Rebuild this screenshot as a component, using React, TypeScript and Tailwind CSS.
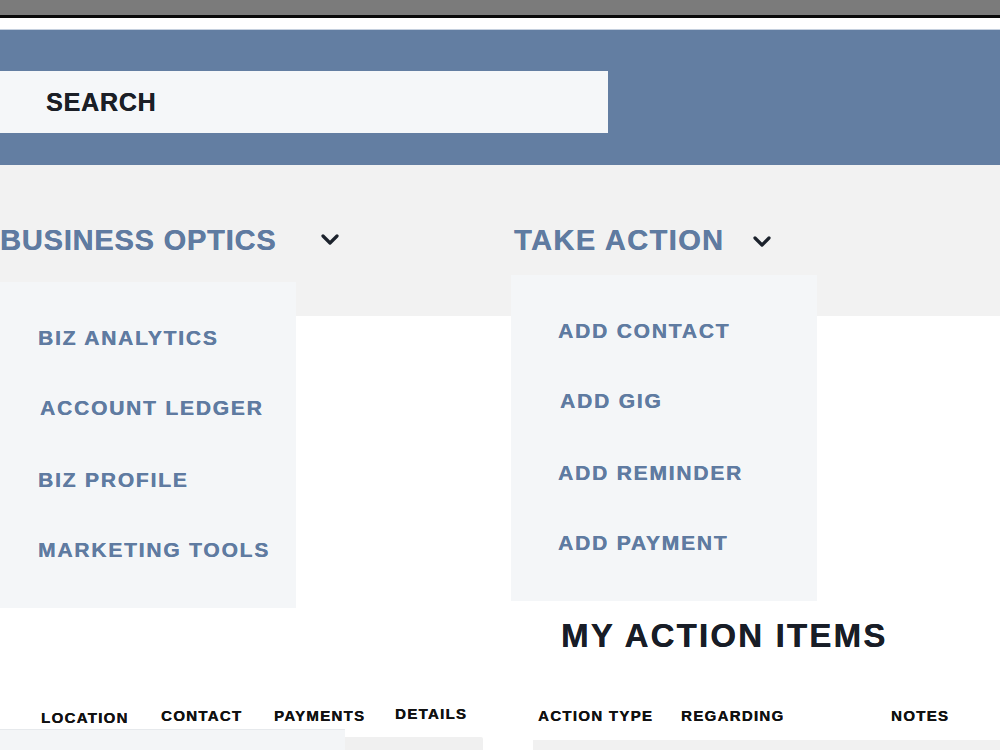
import React from "react";

const Chevron = ({ className }: { className?: string }) => (
  <svg className={className} width="20" height="12" viewBox="0 0 20 12" fill="none">
    <polyline points="3,2 10,9 17,2" stroke="#1c222c" strokeWidth="3.2" strokeLinecap="round" strokeLinejoin="round" />
  </svg>
);

const MenuItem = ({ children, className = "" }: { children: React.ReactNode; className?: string }) => (
  <div className={`h-[70px] flex items-center text-[21px] font-bold tracking-[1.8px] text-[#5f7ba1] leading-none ${className}`}>{children}</div>
);

export default function App() {
  return (
    <div className="w-[1000px] h-[750px] overflow-hidden bg-white font-['Liberation_Sans',Arial,sans-serif] flex flex-col [text-shadow:0.35px_0_0_currentColor]">
      <div className="h-[15px] bg-[#7b7b7b] shrink-0" />
      <div className="h-[3px] bg-[#0a0a0a] shrink-0" />
      <div className="h-[11px] bg-white shrink-0" />
      <div className="h-[1px] bg-[#c5d0de] shrink-0" />
      <header className="h-[135px] bg-[#637ea2] pt-[41px] shrink-0">
        <div className="w-[608px] h-[62px] bg-[#f5f7f9] flex items-center pl-[46px]">
          <span className="text-[25px] font-bold tracking-[0.8px] text-[#1b1f27] leading-none">SEARCH</span>
        </div>
      </header>
      <section className="h-[151px] bg-[#f2f2f2] relative shrink-0 z-10">
        <div className="flex items-center pt-[61px]">
          <div className="w-[514px] flex items-center">
            <span className="text-[29px] font-bold tracking-[0.8px] text-[#5f7ba1] leading-none">BUSINESS OPTICS</span>
            <Chevron className="ml-[44px] -mt-[2px]" />
          </div>
          <div className="flex items-center">
            <span className="text-[29px] font-bold tracking-[1.4px] text-[#5f7ba1] leading-none">TAKE ACTION</span>
            <Chevron className="ml-[28px] mt-[2px]" />
          </div>
        </div>
        <div className="absolute left-0 top-[117px] w-[296px] h-[326px] bg-[#f4f6f8] pt-[20px] pl-[38px]">
          <MenuItem>BIZ ANALYTICS</MenuItem>
          <MenuItem className="pl-[2px]">ACCOUNT LEDGER</MenuItem>
          <MenuItem className="mt-[2px]">BIZ PROFILE</MenuItem>
          <MenuItem>MARKETING TOOLS</MenuItem>
        </div>
        <div className="absolute left-[511px] top-[110px] w-[306px] h-[326px] bg-[#f4f6f8] pt-[20px] pl-[47px]">
          <MenuItem>ADD CONTACT</MenuItem>
          <MenuItem className="pl-[2px]">ADD GIG</MenuItem>
          <MenuItem className="mt-[2px]">ADD REMINDER</MenuItem>
          <MenuItem>ADD PAYMENT</MenuItem>
        </div>
      </section>
      <main className="flex-1 flex flex-col pt-[303px]">
        <h2 className="ml-[561px] text-[33px] font-bold tracking-[2.2px] text-[#181d27] leading-none">MY ACTION ITEMS</h2>
        <div className="flex items-start mt-[56px] pl-[41px] text-[15px] font-bold tracking-[1.3px] text-[#111] leading-none">
          <span className="w-[120px] mt-[2px]">LOCATION</span>
          <span className="w-[113px]">CONTACT</span>
          <span className="w-[121px]">PAYMENTS</span>
          <span className="w-[143px] -mt-[2px]">DETAILS</span>
          <span className="w-[143px]">ACTION TYPE</span>
          <span className="w-[210px]">REGARDING</span>
          <span>NOTES</span>
        </div>
        <div className="flex items-start flex-1">
          <div className="w-[345px] h-[40px] mt-[4px] bg-[#f3f5f7] border-t border-[#e6e9ec]" />
          <div className="w-[138px] h-[40px] mt-[12px] bg-[#f0f0f0] rounded-tr-[2px]" />
          <div className="ml-[50px] flex-1 h-[40px] mt-[15px] bg-[#f1f1f1]" />
        </div>
      </main>
    </div>
  );
}
